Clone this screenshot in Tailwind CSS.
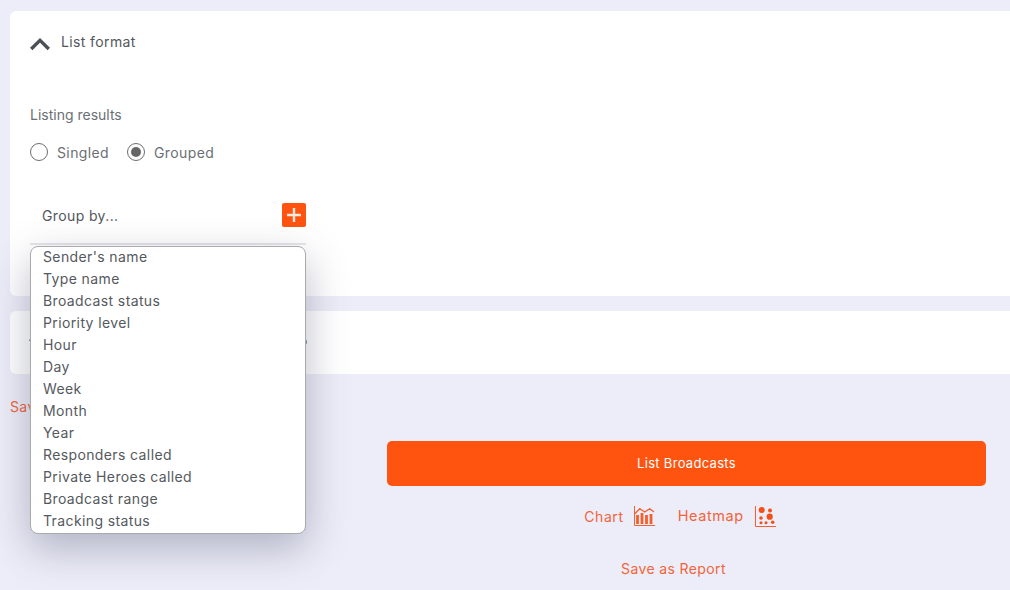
<!DOCTYPE html>
<html lang="en">

<head>
    <meta charset="UTF-8">
    <meta name="viewport" content="width=device-width, initial-scale=1.0">
    <title>List Broadcasts</title>
    <script src="https://cdn.jsdelivr.net/npm/@tailwindcss/browser@4"></script>
</head>

<body class="w-[1010px] h-[590px] overflow-hidden bg-[#ecedf8] font-['Inter','Liberation_Sans',sans-serif] text-[14px] tracking-[0.38px] text-[#53575c]">
    <div class="relative h-[590px] pt-[11px] pl-[10px]">

        <!-- List format card -->
        <section class="h-[285px] bg-white rounded-l-[6px] pl-[20px] pt-[21px]">
            <div class="flex items-center gap-[11px] h-[18px]">
                <svg class="w-[20px] h-[14px] mt-[6px]" viewBox="0 0 20 14" fill="none" stroke="#4a5055" stroke-width="3.4">
                    <path d="M1.2 12 10 3.4 18.8 12" />
                </svg>
                <span>List format</span>
            </div>
            <p class="mt-[55px] leading-[20px] tracking-normal text-[#6b6f75]">Listing results</p>
            <div class="flex items-center mt-[17px] h-[20px] text-[#6b6f75]">
                <span class="w-[18px] h-[18px] rounded-full border border-[#6d6d6d]"></span>
                <span class="ml-[9px]">Singled</span>
                <span class="ml-[18px] w-[18px] h-[18px] rounded-full border border-[#6d6d6d] flex items-center justify-center">
                    <span class="w-[10px] h-[10px] rounded-full bg-[#666666]"></span>
                </span>
                <span class="ml-[9px]">Grouped</span>
            </div>
            <div class="flex items-center justify-between w-[276px] mt-[41px] h-[24px] pl-[12px]">
                <span>Group by...</span>
                <span class="w-[24px] h-[24px] rounded-[2px] bg-[#ff540f] flex items-center justify-center">
                    <svg class="w-[14px] h-[14px]" viewBox="0 0 14 14" fill="none" stroke="#ffe9de" stroke-width="2.4">
                        <path d="M7 0v14M0 7h14" />
                    </svg>
                </span>
            </div>
            <div class="w-[276px] h-[2px] mt-[16px] bg-[#e6e6e8]"></div>
        </section>

        <!-- Collapsed card, mostly under the dropdown -->
        <section class="mt-[15px] h-[63px] bg-white rounded-l-[6px] pl-[19px] pt-[25px]">
            <div class="flex items-start justify-between w-[278px]">
                <svg class="w-[20px] h-[14px]" viewBox="0 0 20 14" fill="none" stroke="#4a5055" stroke-width="3.4">
                    <path d="M1.2 3 10 11.6 18.8 3" />
                </svg>
                <span class="w-[6px] h-[6px] mt-[3px] rounded-full bg-[#7b8da0]"></span>
            </div>
        </section>

        <p class="mt-[24px] leading-[18px] text-[#f2643a]">Save</p>

        <!-- Actions -->
        <div class="absolute left-[387px] top-[441px] w-[599px] flex flex-col items-center">
            <button class="w-full h-[45px] rounded-[5px] bg-[#ff540f] text-white text-[13px] tracking-[0.3px] font-normal">List Broadcasts</button>
            <div class="flex items-center mt-[19px] h-[22px] mr-[13px] text-[#f2643a]">
                <span class="tracking-[0.6px]">Chart</span>
                <svg class="ml-[10px] w-[21px] h-[20px]" viewBox="0 0 21 20" fill="none" stroke="#f2602f">
                    <path d="M.5 0v19.5H21" />
                    <path d="M1 7.7 5.7 2.7 10.7 6 15.7 2.7 20 6" stroke-width="1.3" />
                    <path d="M3.5 18V9M8 18V7M12.5 18V9M17 18V8" stroke-width="2.8" />
                </svg>
                <span class="ml-[23px] text-[14.5px] tracking-[0.6px]">Heatmap</span>
                <svg class="ml-[11px] w-[21px] h-[21px]" viewBox="0 0 21 21" fill="#f2501a">
                    <path d="M.5 0v20.5H21" fill="none" stroke="#f2602f" />
                    <circle cx="6.7" cy="4" r="3" />
                    <circle cx="15" cy="4.6" r="2" />
                    <circle cx="6" cy="12" r="1.8" />
                    <circle cx="14.7" cy="10.7" r="3.1" />
                    <circle cx="6" cy="16.7" r="1.5" />
                    <circle cx="11" cy="16.7" r="1.5" />
                    <circle cx="17.7" cy="16.3" r="1.8" />
                </svg>
            </div>
            <a class="mt-[32px] mr-[26px] leading-[20px] text-[#f2643a]">Save as Report</a>
        </div>

        <!-- Open dropdown -->
        <ul class="absolute left-[30px] top-[246px] w-[276px] h-[288px] overflow-hidden bg-white border border-[#a9a9ae] rounded-[8px] shadow-[0_14px_40px_rgba(70,72,100,0.36)] pl-[12px] leading-[22px] text-[#55595e]">
            <li class="-mt-[1px]">Sender's name</li>
            <li>Type name</li>
            <li>Broadcast status</li>
            <li>Priority level</li>
            <li>Hour</li>
            <li>Day</li>
            <li>Week</li>
            <li>Month</li>
            <li>Year</li>
            <li>Responders called</li>
            <li>Private Heroes called</li>
            <li>Broadcast range</li>
            <li>Tracking status</li>
        </ul>
    </div>
</body>

</html>
